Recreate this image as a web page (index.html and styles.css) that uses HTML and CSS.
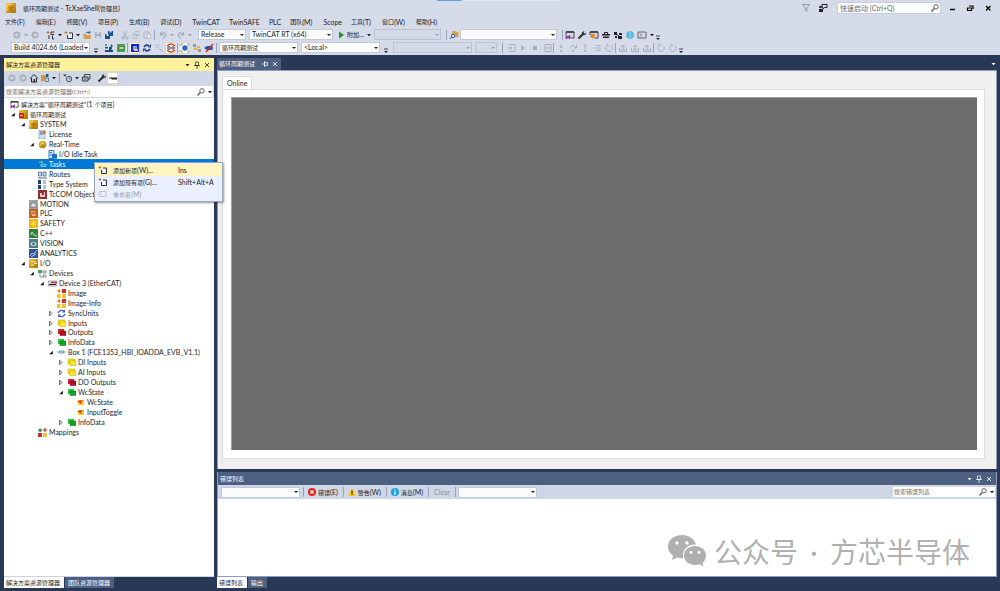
FILE: index.html
```html
<!DOCTYPE html>
<html lang="zh-CN">
<head>
<meta charset="utf-8">
<title>循环周期测试 - TcXaeShell</title>
<link rel="stylesheet" href="styles.css">
</head>
<body>
<svg class="defs" aria-hidden="true">
  <defs>
    <linearGradient id="gold" x1="0" y1="0" x2="1" y2="1"><stop offset="0" stop-color="#f0c43c"/><stop offset="1" stop-color="#a86f08"/></linearGradient>
    <symbol id="caret" viewBox="0 0 7 10"><path d="M2 4h4L4 6.300z" fill="currentColor"/></symbol>
    <symbol id="over" viewBox="0 0 5 12"><path d="M1 7h4" stroke="currentColor" stroke-width=".8"/><path d="M1 9h4L3 11z" fill="currentColor"/></symbol>
    <symbol id="cube" viewBox="0 0 10 10"><rect width="10" height="10" rx="1" fill="url(#gold)"/><path d="M3 4l3-1 2 1v3L5 8.500 3 7z" fill="#c48a14"/><path d="M3 4l2 1 3-1M5 5v3.500" stroke="#8a5a08" stroke-width=".6" fill="none"/><path d="M1 8V2l4-1" stroke="#fbe48a" stroke-width=".8" fill="none"/></symbol>
    <symbol id="back" viewBox="0 0 10 10"><circle cx="5" cy="5" r="3.500" fill="#a9aebb"/><path d="M7 5H3.500M5 3.300L3.300 5 5 6.700" stroke="#e8ebf3" fill="none"/></symbol>
    <symbol id="fwd" viewBox="0 0 10 10"><circle cx="5" cy="5" r="3.500" fill="#a9aebb"/><path d="M3 5h3.500M5 3.300L6.700 5 5 6.700" stroke="#e8ebf3" fill="none"/></symbol>
    <symbol id="newp" viewBox="0 0 10 10"><path d="M2 1v3M.5 2.500h3" stroke="#c27d1a"/><path d="M5 2h3.500M5 2v2.500h3M3 5v4M6.500 5.500V9H8" fill="none" stroke="#333"/></symbol>
    <symbol id="newi" viewBox="0 0 10 10"><path d="M2 1v3M.5 2.500h3" stroke="#c27d1a"/><path d="M5 3h3.500v5.500h-5V5" fill="#eef" stroke="#333"/></symbol>
    <symbol id="open" viewBox="0 0 10 10"><path d="M1 4h3l1 1h4v4H2z" fill="#d9a04a"/><path d="M4 3q2-2 4 0M8 1v2H6" stroke="#1d5fa8" fill="none"/></symbol>
    <symbol id="save" viewBox="0 0 10 10"><path d="M2 2h6v6H2z" fill="#a9aebb"/><path d="M3.500 2h3v2h-3zM3.500 6h3v2h-3z" fill="#d6dbe9"/></symbol>
    <symbol id="saveall" viewBox="0 0 10 10"><path d="M4 1h5v5H4zM1 4h5v5H1z" fill="#1b4e8c"/><path d="M5.500 1h2v1.500h-2zM2.500 4h2v2h-2z" fill="#d6dbe9"/></symbol>
    <symbol id="cut" viewBox="0 0 10 10"><path d="M3 1l3 6M7 1L4 7" stroke="#aab0bd" fill="none"/><circle cx="3" cy="8" r="1.200" fill="none" stroke="#aab0bd"/><circle cx="7" cy="8" r="1.200" fill="none" stroke="#aab0bd"/></symbol>
    <symbol id="copy" viewBox="0 0 10 10"><path d="M4 1.500h4v4H4zM2 4h4v4.500H2z" fill="#d6dbe9" stroke="#b0b5c2" stroke-width=".8"/></symbol>
    <symbol id="paste" viewBox="0 0 10 10"><path d="M2 2h5v6H2z" fill="none" stroke="#b0b5c2"/><path d="M5 4h3.500v4.500H5z" fill="#e6e9f2" stroke="#b0b5c2" stroke-width=".8"/></symbol>
    <symbol id="undo" viewBox="0 0 10 10"><path d="M2.500 2v3h3M3 4.500Q5 2 7 3.500T5 8.500" stroke="#a4aab8" fill="none" stroke-width="1.200"/></symbol>
    <symbol id="redo" viewBox="0 0 10 10"><path d="M7.500 2v3h-3M7 4.500Q5 2 3 3.500T5 8.500" stroke="#a4aab8" fill="none" stroke-width="1.200"/></symbol>
    <symbol id="play" viewBox="0 0 10 10"><path d="M3 1.500L8 5 3 8.500z" fill="#2b8a2f"/></symbol>
    <symbol id="find" viewBox="0 0 10 10"><path d="M3 1h3l1 1h2.500v5H3z" fill="#d9a04a"/><circle cx="4" cy="6" r="1.700" fill="#dfe8f5" stroke="#2866a8"/><path d="M2.500 7L1 9" stroke="#2866a8"/></symbol>
    <symbol id="winp" viewBox="0 0 10 10"><path d="M1 5V2h8v6H6" fill="none" stroke="#444"/><path d="M1 2h8" stroke="#333" stroke-width="1.500"/><path d="M1 5.500l2 1.500 2-2v4L3 7.500 1 9z" fill="#7a2f93" stroke="#7a2f93" stroke-width=".7"/></symbol>
    <symbol id="wino" viewBox="0 0 10 10"><path d="M1 5V2h8v6H6" fill="none" stroke="#444"/><path d="M1 2h8" stroke="#333" stroke-width="1.500"/><path d="M2 4h4v2L5 9 1 7z" fill="#dd8a2a"/></symbol>
    <symbol id="wrench" viewBox="0 0 10 10"><path d="M1.500 8.500L5.500 4.500" stroke="#2b2b2b" stroke-width="1.800"/><path d="M5 5Q4 1.500 7.500 1.200L6.500 3 7.500 3.800 9 2.500Q9.200 6 5 5" fill="#2b2b2b"/></symbol>
    <symbol id="toolbox" viewBox="0 0 10 10"><path d="M3.500 4V2.500h3V4" fill="none" stroke="#222"/><path d="M1 4h8v1.500H1zM2 6.500h6V8H2z" fill="#222"/></symbol>
    <symbol id="team" viewBox="0 0 10 10"><path d="M1 2h3v3H1zM6 3h3v2H6zM2 6h2v2H2zM5 6h4v3H5z" fill="#222"/><path d="M3 4l4 3" stroke="#222"/></symbol>
    <symbol id="globe" viewBox="0 0 10 10"><circle cx="5" cy="5" r="3.800" fill="#35a8dc"/><path d="M1 5h8M5 1v8M2.500 3h5M2.500 7h5" stroke="#b8e2f5" stroke-width=".6"/></symbol>
    <symbol id="cmd" viewBox="0 0 10 10"><path d="M1 2h8v6H1z" fill="none" stroke="#666"/><path d="M3 3.500L4.500 5 3 6.500" stroke="#555" fill="none" stroke-width=".8"/></symbol>
    <symbol id="act" viewBox="0 0 10 10"><path d="M1 1h2v2H1z" fill="#48a060"/><path d="M1 4h3v1.500H1zM1 7h8v2H1zM5 4h2v4H5z" fill="#1c4c76"/><path d="M6 3h3M7.500 1.500v5" stroke="#1c6ba4"/></symbol>
    <symbol id="green" viewBox="0 0 10 10"><path d="M1 1h8v8H1z" fill="#4fa04f"/><path d="M3 3.500h5v3H3z" fill="#b9dcae" stroke="#216d2b" stroke-width=".6"/></symbol>
    <symbol id="bluecfg" viewBox="0 0 10 10"><path d="M1 1h8v8H1z" fill="#1725c8"/><path d="M3 3h4v4H3z" fill="#7fa6d8"/><path d="M4 6h4v2H4z" fill="#d8c98a"/></symbol>
    <symbol id="reload" viewBox="0 0 10 10"><path d="M2 4Q4 1 7 3M8 6Q6 9 3 7" stroke="#27408a" stroke-width="1.600" fill="none"/><path d="M6 4.500h3V1zM4 5.500H1V9z" fill="#27408a"/></symbol>
    <symbol id="wand" viewBox="0 0 10 10"><path d="M3 3l6 6M2 1v2M1 5l2-1M5 1L4 3" stroke="#b0b4c0" fill="none"/></symbol>
    <symbol id="freerun" viewBox="0 0 10 10"><path d="M1 3Q5-1 9 3M1 7q4 4 8 0" stroke="#d5402f" fill="none" stroke-width="1.300"/><circle cx="3" cy="5" r="1.300" fill="none" stroke="#444"/><circle cx="7" cy="5" r="1.300" fill="none" stroke="#444"/></symbol>
    <symbol id="target" viewBox="0 0 10 10"><path d="M1 3V1h2M7 1h2v2M9 7v2H7M3 9H1V7" stroke="#88a" fill="none"/><circle cx="5" cy="5" r="2.700" fill="#2f62bd"/></symbol>
    <symbol id="links" viewBox="0 0 10 10"><path d="M1 1h3v3H1z" fill="#7b9dc0"/><path d="M5 3h3v2H5zM2 5h3v2H2z" fill="#e3b23c"/><path d="M6 6h3v3H6z" fill="#999"/></symbol>
    <symbol id="nogo" viewBox="0 0 10 10"><path d="M0 5l3-2h5l1 2-1 2H3z" fill="#244fae"/><path d="M2 9L9 1" stroke="#d42a20" stroke-width="1.500"/></symbol>
    <symbol id="din" viewBox="0 0 10 10"><path d="M3 1.500h6v7H3M1 5h5M4 3l2 2-2 2" stroke="#a8adba" fill="none"/></symbol>
    <symbol id="dplay" viewBox="0 0 10 10"><path d="M3 2l4 3-4 3z" fill="#aeb3c0"/></symbol>
    <symbol id="dstop" viewBox="0 0 10 10"><path d="M3 3h4v4H3z" fill="#a5aab7"/></symbol>
    <symbol id="dout" viewBox="0 0 10 10"><path d="M3 3V1.500h6v7H3V7M8 5H2M4 3L2 5l2 2" stroke="#aab0bd" fill="none"/></symbol>
    <symbol id="step" viewBox="0 0 10 10"><path d="M5 1v4M3.500 3.500L5 5l1.500-1.500" stroke="#a8adba" fill="none"/><circle cx="5" cy="8" r="1.100" fill="#a8adba"/></symbol>
    <symbol id="stepup" viewBox="0 0 10 10"><path d="M5 1.500V6M3.500 3L5 1.500 6.500 3" stroke="#a8adba" fill="none"/><circle cx="5" cy="8" r="1.100" fill="#a8adba"/></symbol>
    <symbol id="stepo" viewBox="0 0 10 10"><path d="M2 5q3-5 6 0M8.500 2v3H6" stroke="#a8adba" fill="none"/><circle cx="5" cy="8" r="1.100" fill="#a8adba"/></symbol>
    <symbol id="lines" viewBox="0 0 10 10"><path d="M4 2.500h5M4 5h5M4 7.500h5M1 5h2" stroke="#a8adba"/></symbol>
    <symbol id="cyc" viewBox="0 0 10 10"><path d="M3 2.500A3.300 3.300 0 1 0 7 2.500M2 1h2v3" stroke="#aeb3c0" fill="none"/></symbol>
    <symbol id="dbox" viewBox="0 0 10 10"><path d="M1.500 5v3.500h7V5M5 7V2M3 4l2-2 2 2M3 6.500h4" stroke="#a8adba" fill="none"/></symbol>
    <symbol id="home" viewBox="0 0 10 10"><path d="M1 5.500L5 1.500l4 4M2.500 5v4h5V5" fill="none" stroke="#222"/><path d="M4.500 6h1.500v3H4.500z" fill="#222"/></symbol>
    <symbol id="sync" viewBox="0 0 10 10"><path d="M1 2h4l1 1v5H1z" fill="#d79a3c"/><path d="M6 1h2.500v3H6z" fill="#244f8a"/><path d="M4 5h4.500v3.500H5" fill="none" stroke="#5a78a0"/></symbol>
    <symbol id="clock" viewBox="0 0 10 10"><circle cx="6" cy="6" r="2.700" fill="none" stroke="#444" stroke-width=".9"/><path d="M6 4.500V6h1.300" stroke="#444" fill="none" stroke-width=".7"/><path d="M0 1.500h4L2 3.800z" fill="#444"/></symbol>
    <symbol id="coll" viewBox="0 0 10 10"><path d="M3.500 4V1.500H9V6H7" fill="none" stroke="#444"/><path d="M1.500 4H7v4H1.500z" fill="none" stroke="#333"/><path d="M3 6h2.500" stroke="#333"/></symbol>
    <symbol id="dash" viewBox="0 0 10 10"><path d="M1 5h3" stroke="#222"/><path d="M3.500 4.500h5.500v2H3.500z" fill="#222"/></symbol>
    <symbol id="pin" viewBox="0 0 8 10"><path d="M2.500 2h3v3.500h-3zM1 5.500h6M4 5.500V9" stroke="currentColor" fill="none" stroke-width=".7"/></symbol>
    <symbol id="hpin" viewBox="0 0 8 10"><path d="M3.500 3.500h3v3h-3zM3.500 2v6M1 5h2.500" stroke="currentColor" fill="none" stroke-width=".7"/></symbol>
    <symbol id="x" viewBox="0 0 8 10"><path d="M2 3l4 4M6 3L2 7" stroke="currentColor" fill="none" stroke-width=".8"/></symbol>
    <symbol id="mag" viewBox="0 0 10 10"><circle cx="6" cy="3.800" r="2.200" fill="none" stroke="#555" stroke-width=".9"/><path d="M4.300 5.500L1.500 8.500" stroke="#555" stroke-width="1.200"/></symbol>
    <symbol id="funnel" viewBox="0 0 10 10"><path d="M1.500 1.500h7L5.800 5v3.500L4.200 7V5z" fill="none" stroke="#8a90a0" stroke-width=".9"/></symbol>
    <symbol id="feedback" viewBox="0 0 10 10"><path d="M4 1.500h5v3H6.500L5 6V4.500H4z" fill="none" stroke="#222"/><circle cx="2.500" cy="4" r="1.300" fill="#222"/><path d="M1 6h4v3H1z" fill="#222"/></symbol>
    <symbol id="exp" viewBox="0 0 6 10"><path d="M5 3v4H1z" fill="#111"/></symbol>
    <symbol id="col" viewBox="0 0 6 10"><path d="M1.500 2.500L4 5 1.500 7.500z" fill="#fff" stroke="#222" stroke-width=".8"/></symbol>
    <symbol id="proj" viewBox="0 0 9 9"><rect width="9" height="9" fill="url(#gold)"/><path d="M0 3h5v5H0z" fill="#d6281e"/><path d="M1.500 5.500h2" stroke="#fff"/></symbol>
    <symbol id="lic" viewBox="0 0 9 9"><path d="M1 0h6v9H1z" fill="#d5e3f3" stroke="#6a8db4" stroke-width=".6"/><path d="M2 2h2M2 4h3" stroke="#1d6ab5"/><circle cx="6" cy="2.500" r="1.700" fill="#e07030"/></symbol>
    <symbol id="rt" viewBox="0 0 9 9"><circle cx="4.500" cy="4.500" r="3.800" fill="url(#gold)"/><path d="M2 5l2-2 3 1" stroke="#fbe48a" fill="none" stroke-width=".8"/></symbol>
    <symbol id="task" viewBox="0 0 9 9"><path d="M1 .5h5v8H1z" fill="#e2ecf8" stroke="#2f78bd"/><path d="M4 4h5v4.500H4z" fill="#1771cc"/><path d="M2 2.500h2M2 5h2" stroke="#1771cc"/></symbol>
    <symbol id="tasks" viewBox="0 0 9 9"><path d="M1 1h4v2H1z" fill="#58b47a"/><path d="M3 4h5v2.500H3z" fill="#3b9be0" stroke="#9bd0f5" stroke-width=".7"/></symbol>
    <symbol id="routes" viewBox="0 0 9 9"><path d="M.5 2h3v4h-3zM5 2h3v4H5z" fill="#cfd8e5" stroke="#4c6584" stroke-width=".8"/><path d="M0 8h9" stroke="#4c6584"/></symbol>
    <symbol id="types" viewBox="0 0 9 9"><path d="M0 0h3v4H0zM0 5h3v4H0z" fill="#263b7b"/><path d="M5 1h3M5 3h3M5 6h3M5 8h3" stroke="#5d7fc5"/></symbol>
    <symbol id="tccom" viewBox="0 0 9 9"><path d="M0 0h9v9H0z" fill="#8f3038"/><path d="M2 7V3h2v2h2V2h1v5z" fill="#eec5c5"/></symbol>
    <symbol id="motion" viewBox="0 0 9 9"><path d="M0 0h9v9H0z" fill="#9da2a5"/><path d="M1 7l2-4h3l2 4z" fill="#e5e5e0" stroke="#5b5b5b" stroke-width=".6"/></symbol>
    <symbol id="plc" viewBox="0 0 9 9"><path d="M0 0h9v9H0z" fill="#c65f1c"/><path d="M2 2h4l1 5H3z" fill="#eab283"/><path d="M3 4h3" stroke="#8a3c0a"/></symbol>
    <symbol id="safety" viewBox="0 0 9 9"><path d="M0 0h9v9H0z" fill="#f3b409"/><path d="M4.500 1v7M2 3l5 3M2 6l5-3" stroke="#ffe68a"/></symbol>
    <symbol id="cpp" viewBox="0 0 9 9"><path d="M0 0h9v9H0z" fill="#337d3a"/><path d="M1.500 6l1.500-3 2 3 3 1" stroke="#c5e8b0" fill="none"/></symbol>
    <symbol id="vision" viewBox="0 0 9 9"><path d="M0 0h9v9H0z" fill="#4b7d84"/><ellipse cx="4.500" cy="5" rx="3" ry="2" fill="#cfe0e0"/><circle cx="4.500" cy="5" r="1.200" fill="#284a50"/></symbol>
    <symbol id="ana" viewBox="0 0 9 9"><path d="M0 0h9v9H0z" fill="#2f509a"/><path d="M1 7l2-3 2 1 3-4M2 8l5-3" stroke="#b9cbee" fill="none"/></symbol>
    <symbol id="io" viewBox="0 0 9 9"><path d="M0 0h9v9H0z" fill="url(#gold)"/><path d="M2 3h5M2 6h3M5 4.500h3" stroke="#fff0b0"/></symbol>
    <symbol id="devs" viewBox="0 0 9 9"><path d="M0 1h4v3H0z" fill="#47a052"/><path d="M2 4v4h3M5 2h3v2H5zM5 6h3v2H5z" stroke="#777" fill="none" stroke-width=".8"/></symbol>
    <symbol id="dev" viewBox="0 0 9 9"><path d="M0 2h9v5H0z" fill="#ddd" stroke="#777" stroke-width=".6"/><path d="M3 3.500h6" stroke="#d12626" stroke-width="1.500"/><path d="M1 5.500h7" stroke="#222"/></symbol>
    <symbol id="img" viewBox="0 0 9 9"><path d="M5 0h4v4H5z" fill="#d92d2d"/><path d="M0 5h3.500v4H0zM5 5h4v4H5z" fill="#eec52c"/><path d="M2 0l2 2-2 2-2-2z" fill="#e8842e"/></symbol>
    <symbol id="units" viewBox="0 0 9 9"><path d="M1 4Q3 0 7 2M8 5Q6 9 2 7" stroke="#3a55c4" stroke-width="1.300" fill="none"/><path d="M5 3.500h3V.5zM4 5.500H1v3z" fill="#3a55c4"/></symbol>
    <symbol id="fy" viewBox="0 0 9 9"><path d="M1 1h7v5H1z" fill="#f6e017" stroke="#bba20c" stroke-width=".5"/><path d="M3 3h6v4.500H3z" fill="#ffea2c" stroke="#bba20c" stroke-width=".5"/></symbol>
    <symbol id="fr" viewBox="0 0 9 9"><path d="M1 1h6v5H1z" fill="#d32436"/><path d="M3 3h6v4.500H3z" fill="#b50d22" stroke="#780814" stroke-width=".5"/></symbol>
    <symbol id="fg" viewBox="0 0 9 9"><path d="M1 1h6v5H1z" fill="#2ec540"/><path d="M3 3h6v4.500H3z" fill="#10a426" stroke="#07711a" stroke-width=".5"/></symbol>
    <symbol id="box" viewBox="0 0 9 9"><path d="M0 4h9" stroke="#7ba7cf"/><path d="M2.500 3h4v2h-4z" fill="#d6e8f6" stroke="#3b88c4" stroke-width=".8"/></symbol>
    <symbol id="var" viewBox="0 0 9 9"><path d="M2 2h6v5H2z" fill="#f3ce26"/><path d="M1 3l6-1-2 2.500 1 2z" fill="#dc3522"/></symbol>
    <symbol id="map" viewBox="0 0 9 9"><circle cx="2.200" cy="2.200" r="1.800" fill="#2f9a42"/><path d="M5 2h4M7 0v4" stroke="#d12d2d" stroke-width="1.200"/><path d="M0 5h4v4H0z" fill="#cf2d2d"/><path d="M5 5h4v4H5z" fill="#eec52c"/></symbol>
    <symbol id="ren" viewBox="0 0 10 10"><path d="M1 2.500h7v5H1zM3 4v2" fill="none" stroke="#c0c5d0"/></symbol>
    <symbol id="err" viewBox="0 0 10 10"><circle cx="5" cy="5" r="4" fill="#e02418"/><path d="M3.400 3.400l3.200 3.200M6.600 3.400L3.400 6.600" stroke="#fff" stroke-width="1.200"/></symbol>
    <symbol id="warn" viewBox="0 0 10 10"><path d="M5 1l4 8H1z" fill="#fdc90d"/><path d="M5 3.500v3M5 7.200v1" stroke="#000"/></symbol>
    <symbol id="info" viewBox="0 0 10 10"><circle cx="5" cy="5" r="4" fill="#1ba1e2"/><path d="M5 2.300v1.200M5 4.300v3.400" stroke="#fff" stroke-width="1.200"/></symbol>
  </defs>
</svg>

<header class="top">
  <div class="notch"></div>
  <div class="titlebar">
    <svg class="ic"><use href="#cube"/></svg>
    <h1 class="title"><span class="zh">循环周期测试</span> - TcXaeShell(<span class="zh">管理员</span>)</h1>
    <button class="wide" aria-label="筛选"><svg class="ic"><use href="#funnel"/></svg></button>
    <button class="wide" aria-label="反馈"><svg class="ic"><use href="#feedback"/></svg></button>
    <div class="quick"><input type="text" aria-label="快速启动" placeholder="快速启动 (Ctrl+Q)"><svg class="ic"><use href="#mag"/></svg></div>
    <button class="win" aria-label="最小化"><svg class="ic" viewBox="0 0 10 10"><path d="M3 6.500h5" stroke="#000" stroke-width="1.500"/></svg></button>
    <button class="win" aria-label="还原"><svg class="ic" viewBox="0 0 10 10"><path d="M4 3h4v3M2.500 5h4v2.500h-4z" stroke="#000" stroke-width="1.200" fill="none"/></svg></button>
    <button class="win" aria-label="关闭"><svg class="ic" viewBox="0 0 10 10"><path d="M3 3l4.500 4.500M7.500 3L3 7.500" stroke="#000" stroke-width="1.200"/></svg></button>
  </div>
  <nav class="menu">
    <button class="zm"><span class="zh">文件</span>(F)</button><button class="zm"><span class="zh">编辑</span>(E)</button><button class="zm"><span class="zh">视图</span>(V)</button><button class="zm"><span class="zh">项目</span>(P)</button><button class="zm"><span class="zh">生成</span>(B)</button><button class="zm"><span class="zh">调试</span>(D)</button><button>TwinCAT</button><button>TwinSAFE</button><button>PLC</button><button class="zm"><span class="zh">团队</span>(M)</button><button>Scope</button><button class="zm"><span class="zh">工具</span>(T)</button><button class="zm"><span class="zh">窗口</span>(W)</button><button class="zm"><span class="zh">帮助</span>(H)</button>
  </nav>
  <div class="bar">
    <i class="grip"></i>
    <button class="tb" aria-label="后退"><svg class="ic"><use href="#back"/></svg></button><button class="tc dim" aria-label="后退历史"><svg><use href="#caret"/></svg></button><button class="tb" aria-label="前进"><svg class="ic"><use href="#fwd"/></svg></button><i class="sep none"></i>
    <button class="tb" aria-label="新建项目"><svg class="ic"><use href="#newp"/></svg></button><button class="tc" aria-label="新建选项"><svg><use href="#caret"/></svg></button><button class="tb" aria-label="添加项"><svg class="ic"><use href="#newi"/></svg></button><button class="tc" aria-label="添加选项"><svg><use href="#caret"/></svg></button><button class="tb" aria-label="打开"><svg class="ic"><use href="#open"/></svg></button><button class="tb" aria-label="保存"><svg class="ic"><use href="#save"/></svg></button><button class="tb" aria-label="全部保存"><svg class="ic"><use href="#saveall"/></svg></button><i class="sep none"></i>
    <button class="tb" aria-label="剪切"><svg class="ic"><use href="#cut"/></svg></button><button class="tb" aria-label="复制"><svg class="ic"><use href="#copy"/></svg></button><button class="tb" aria-label="粘贴"><svg class="ic"><use href="#paste"/></svg></button><i class="sep"></i>
    <button class="tb" aria-label="撤消"><svg class="ic"><use href="#undo"/></svg></button><button class="tc dim" aria-label="撤消历史"><svg><use href="#caret"/></svg></button><button class="tb" aria-label="重做"><svg class="ic"><use href="#redo"/></svg></button><button class="tc dim" aria-label="重做历史"><svg><use href="#caret"/></svg></button><i class="sep none"></i>
    <select class="sel w-s" aria-label="配置"><option>Release</option></select>
    <select class="sel w-l" aria-label="平台"><option>TwinCAT RT (x64)</option></select>
    <button class="attach"><svg class="ic"><use href="#play"/></svg><span><span class="zh">附加</span>...</span><svg class="cr"><use href="#caret"/></svg></button>
    <select class="sel w-m off" aria-label="进程" disabled><option></option></select><i class="sep"></i>
    <button class="tb" aria-label="在文件中查找"><svg class="ic"><use href="#find"/></svg></button>
    <select class="sel w-xl" aria-label="查找"><option></option></select><i class="sep"></i>
    <span class="loose"><button class="tb" aria-label="解决方案"><svg class="ic"><use href="#winp"/></svg></button><button class="tb" aria-label="属性"><svg class="ic"><use href="#wrench"/></svg></button><button class="tb" aria-label="对象"><svg class="ic"><use href="#wino"/></svg></button><button class="tb" aria-label="工具箱"><svg class="ic"><use href="#toolbox"/></svg></button><button class="tb" aria-label="团队"><svg class="ic"><use href="#team"/></svg></button><button class="tb" aria-label="浏览器"><svg class="ic"><use href="#globe"/></svg></button><button class="tb" aria-label="命令"><svg class="ic"><use href="#cmd"/></svg></button></span><button class="tc" aria-label="更多窗口"><svg><use href="#caret"/></svg></button>
    <svg class="over"><use href="#over"/></svg>
  </div>
  <div class="bar">
    <i class="grip"></i>
    <select class="sel w-b" aria-label="版本"><option>Build 4024.66 (Loaded</option></select>
    <svg class="over"><use href="#over"/></svg><i class="grip"></i>
    <span class="loose"><button class="tb" aria-label="激活配置"><svg class="ic"><use href="#act"/></svg></button><button class="tb" aria-label="运行模式"><svg class="ic"><use href="#green"/></svg></button><i class="sep"></i><button class="tb on" aria-label="配置模式"><svg class="ic"><use href="#bluecfg"/></svg></button><button class="tb" aria-label="重新加载"><svg class="ic"><use href="#reload"/></svg></button><button class="tb" aria-label="扫描"><svg class="ic"><use href="#wand"/></svg></button><button class="tb on" aria-label="自由运行"><svg class="ic"><use href="#freerun"/></svg></button><i class="sep"></i><button class="tb on" aria-label="目标"><svg class="ic"><use href="#target"/></svg></button><button class="tb" aria-label="链接"><svg class="ic"><use href="#links"/></svg></button><button class="tb" aria-label="断开"><svg class="ic"><use href="#nogo"/></svg></button></span><i class="sep"></i>
    <select class="sel w-b cn" aria-label="项目"><option>循环周期测试</option></select>
    <select class="sel w-b" aria-label="目标系统"><option>&lt;Local&gt;</option></select>
    <svg class="over"><use href="#over"/></svg><i class="grip"></i>
    <select class="sel w-b off" aria-label="实例" disabled><option></option></select>
    <select class="sel w-xs off" aria-label="任务" disabled><option></option></select><i class="sep"></i>
    <span class="loose"><button class="tb" aria-label="登录"><svg class="ic"><use href="#din"/></svg></button><button class="tb" aria-label="启动"><svg class="ic"><use href="#dplay"/></svg></button><button class="tb" aria-label="停止"><svg class="ic"><use href="#dstop"/></svg></button><button class="tb" aria-label="注销"><svg class="ic"><use href="#dout"/></svg></button><i class="sep"></i><button class="tb" aria-label="步入"><svg class="ic"><use href="#step"/></svg></button><button class="tb" aria-label="步过"><svg class="ic"><use href="#stepo"/></svg></button><button class="tb" aria-label="步出"><svg class="ic"><use href="#stepup"/></svg></button><button class="tb" aria-label="显示语句"><svg class="ic"><use href="#lines"/></svg></button><button class="tb" aria-label="单周期"><svg class="ic"><use href="#cyc"/></svg></button><i class="sep"></i><button class="tb" aria-label="写入"><svg class="ic"><use href="#dbox"/></svg></button><button class="tb" aria-label="强制"><svg class="ic"><use href="#dbox"/></svg></button><button class="tb" aria-label="释放"><svg class="ic"><use href="#dbox"/></svg></button><i class="sep"></i><button class="tb" aria-label="复位"><svg class="ic"><use href="#cyc"/></svg></button><button class="tb" aria-label="原始复位"><svg class="ic"><use href="#cyc"/></svg></button></span>
    <svg class="over"><use href="#over"/></svg>
  </div>
</header>

<main class="work">
  <aside class="side">
    <section class="panel">
      <div class="phead gold"><h2 class="zh">解决方案资源管理器</h2><button aria-label="窗口位置"><svg class="pc"><use href="#caret"/></svg></button><button aria-label="自动隐藏"><svg class="pc"><use href="#pin"/></svg></button><button aria-label="关闭"><svg class="pc"><use href="#x"/></svg></button></div>
      <div class="ptools">
        <button class="tb" aria-label="后退"><svg class="ic"><use href="#back"/></svg></button><button class="tb" aria-label="前进"><svg class="ic"><use href="#fwd"/></svg></button><button class="tb" aria-label="主页"><svg class="ic"><use href="#home"/></svg></button><button class="tb" aria-label="视图"><svg class="ic"><use href="#sync"/></svg></button><button class="tc" aria-label="视图选项"><svg><use href="#caret"/></svg></button><i class="sep"></i><button class="tb" aria-label="挂起的更改"><svg class="ic"><use href="#clock"/></svg></button><button class="tc" aria-label="更改选项"><svg><use href="#caret"/></svg></button><button class="tb" aria-label="全部折叠"><svg class="ic"><use href="#coll"/></svg></button><i class="sep none"></i><button class="tb" aria-label="属性"><svg class="ic"><use href="#wrench"/></svg></button><button class="tb on" aria-label="预览"><svg class="ic"><use href="#dash"/></svg></button>
      </div>
      <div class="search"><input type="text" aria-label="搜索解决方案" placeholder="搜索解决方案资源管理器(Ctrl+;)"><svg class="ic"><use href="#mag"/></svg><svg class="cr"><use href="#caret"/></svg></div>
      <div class="tree" role="tree">
        <div class="n d0" role="treeitem"><svg class="ti"><use href="#winp"/></svg><span><span class="zh">解决方案"循环周期测试"</span>(1 <span class="zh">个项目</span>)</span></div>
        <div class="n d1" role="treeitem"><svg class="ar"><use href="#exp"/></svg><svg class="ti"><use href="#proj"/></svg><span class="zh">循环周期测试</span></div>
        <div class="n d2" role="treeitem"><svg class="ar"><use href="#exp"/></svg><svg class="ti"><use href="#cube"/></svg><span>SYSTEM</span></div>
        <div class="n d3" role="treeitem"><svg class="ar"></svg><svg class="ti"><use href="#lic"/></svg><span>License</span></div>
        <div class="n d3" role="treeitem"><svg class="ar"><use href="#exp"/></svg><svg class="ti"><use href="#rt"/></svg><span>Real-Time</span></div>
        <div class="n d4" role="treeitem"><svg class="ar"></svg><svg class="ti"><use href="#task"/></svg><span>I/O Idle Task</span></div>
        <div class="n d3 cur" role="treeitem" aria-selected="true"><svg class="ar"></svg><svg class="ti"><use href="#tasks"/></svg><span>Tasks</span></div>
        <div class="n d3" role="treeitem"><svg class="ar"></svg><svg class="ti"><use href="#routes"/></svg><span>Routes</span></div>
        <div class="n d3" role="treeitem"><svg class="ar"></svg><svg class="ti"><use href="#types"/></svg><span>Type System</span></div>
        <div class="n d3" role="treeitem"><svg class="ar"></svg><svg class="ti"><use href="#tccom"/></svg><span>TcCOM Objects</span></div>
        <div class="n d2" role="treeitem"><svg class="ar"></svg><svg class="ti"><use href="#motion"/></svg><span>MOTION</span></div>
        <div class="n d2" role="treeitem"><svg class="ar"></svg><svg class="ti"><use href="#plc"/></svg><span>PLC</span></div>
        <div class="n d2" role="treeitem"><svg class="ar"></svg><svg class="ti"><use href="#safety"/></svg><span>SAFETY</span></div>
        <div class="n d2" role="treeitem"><svg class="ar"></svg><svg class="ti"><use href="#cpp"/></svg><span>C++</span></div>
        <div class="n d2" role="treeitem"><svg class="ar"></svg><svg class="ti"><use href="#vision"/></svg><span>VISION</span></div>
        <div class="n d2" role="treeitem"><svg class="ar"></svg><svg class="ti"><use href="#ana"/></svg><span>ANALYTICS</span></div>
        <div class="n d2" role="treeitem"><svg class="ar"><use href="#exp"/></svg><svg class="ti"><use href="#io"/></svg><span>I/O</span></div>
        <div class="n d3" role="treeitem"><svg class="ar"><use href="#exp"/></svg><svg class="ti"><use href="#devs"/></svg><span>Devices</span></div>
        <div class="n d4" role="treeitem"><svg class="ar"><use href="#exp"/></svg><svg class="ti"><use href="#dev"/></svg><span>Device 3 (EtherCAT)</span></div>
        <div class="n d5" role="treeitem"><svg class="ar"></svg><svg class="ti"><use href="#img"/></svg><span>Image</span></div>
        <div class="n d5" role="treeitem"><svg class="ar"></svg><svg class="ti"><use href="#img"/></svg><span>Image-Info</span></div>
        <div class="n d5" role="treeitem"><svg class="ar"><use href="#col"/></svg><svg class="ti"><use href="#units"/></svg><span>SyncUnits</span></div>
        <div class="n d5" role="treeitem"><svg class="ar"><use href="#col"/></svg><svg class="ti"><use href="#fy"/></svg><span>Inputs</span></div>
        <div class="n d5" role="treeitem"><svg class="ar"><use href="#col"/></svg><svg class="ti"><use href="#fr"/></svg><span>Outputs</span></div>
        <div class="n d5" role="treeitem"><svg class="ar"><use href="#col"/></svg><svg class="ti"><use href="#fg"/></svg><span>InfoData</span></div>
        <div class="n d5" role="treeitem"><svg class="ar"><use href="#exp"/></svg><svg class="ti"><use href="#box"/></svg><span>Box 1 (FCE1353_HBI_IOADDA_EVB_V1.1)</span></div>
        <div class="n d6" role="treeitem"><svg class="ar"><use href="#col"/></svg><svg class="ti"><use href="#fy"/></svg><span>DI Inputs</span></div>
        <div class="n d6" role="treeitem"><svg class="ar"><use href="#col"/></svg><svg class="ti"><use href="#fy"/></svg><span>AI Inputs</span></div>
        <div class="n d6" role="treeitem"><svg class="ar"><use href="#col"/></svg><svg class="ti"><use href="#fr"/></svg><span>DO Outputs</span></div>
        <div class="n d6" role="treeitem"><svg class="ar"><use href="#exp"/></svg><svg class="ti"><use href="#fg"/></svg><span>WcState</span></div>
        <div class="n d7" role="treeitem"><svg class="ar"></svg><svg class="ti"><use href="#var"/></svg><span>WcState</span></div>
        <div class="n d7" role="treeitem"><svg class="ar"></svg><svg class="ti"><use href="#var"/></svg><span>InputToggle</span></div>
        <div class="n d6" role="treeitem"><svg class="ar"><use href="#col"/></svg><svg class="ti"><use href="#fg"/></svg><span>InfoData</span></div>
        <div class="n d3" role="treeitem"><svg class="ar"></svg><svg class="ti"><use href="#map"/></svg><span>Mappings</span></div>
      </div>
    </section>
    <div class="tabs"><button class="zh sel-tab">解决方案资源管理器</button><button class="zh">团队资源管理器</button></div>
  </aside>

  <div class="right">
    <div class="dtabs"><div class="dtab"><span class="zh">循环周期测试</span><button aria-label="固定"><svg class="pc"><use href="#hpin"/></svg></button><button aria-label="关闭"><svg class="pc"><use href="#x"/></svg></button></div><button class="more" aria-label="文档列表"><svg class="pc"><use href="#caret"/></svg></button></div>
    <section class="doc">
      <button class="online">Online</button>
      <div class="page"><div class="canvas"></div></div>
    </section>
    <section class="errors">
      <div class="phead"><h2 class="zh">错误列表</h2><button aria-label="窗口位置"><svg class="pc"><use href="#caret"/></svg></button><button aria-label="自动隐藏"><svg class="pc"><use href="#pin"/></svg></button><button aria-label="关闭"><svg class="pc"><use href="#x"/></svg></button></div>
      <div class="etools">
        <select class="sel w-b" aria-label="范围"><option></option></select><i class="sep"></i>
        <button class="flt"><svg class="ic"><use href="#err"/></svg><span><span class="zh">错误</span>(E)</span></button><i class="sep"></i>
        <button class="flt"><svg class="ic"><use href="#warn"/></svg><span><span class="zh">警告</span>(W)</span></button><i class="sep"></i>
        <button class="flt"><svg class="ic"><use href="#info"/></svg><span><span class="zh">消息</span>(M)</span></button><i class="sep"></i>
        <button class="flt clear" disabled>Clear</button><i class="sep"></i>
        <select class="sel w-b" aria-label="来源"><option></option></select>
        <div class="search"><input type="text" aria-label="搜索错误列表" placeholder="搜索错误列表"><svg class="ic"><use href="#mag"/></svg><svg class="cr"><use href="#caret"/></svg></div>
      </div>
      <div class="elist"></div>
    </section>
    <div class="tabs"><button class="zh sel-tab">错误列表</button><button class="zh">输出</button></div>
  </div>
</main>

<div class="ctx" role="menu">
  <button class="hot" role="menuitem"><svg class="ic"><use href="#newi"/></svg><span><span class="zh">添加新项</span>(W)...</span><span>Ins</span></button>
  <button role="menuitem"><svg class="ic"><use href="#newi"/></svg><span><span class="zh">添加现有项</span>(G)...</span><span>Shift+Alt+A</span></button>
  <button role="menuitem" disabled><svg class="ic"><use href="#ren"/></svg><span><span class="zh">重命名</span>(M)</span><span></span></button>
</div>

<div class="mark">
  <svg viewBox="0 0 38 32"><path d="M14 0C6 0 0 5 0 11.500c0 4 2 7 5 9L4 25l5-2.500c2 .6 4 .9 6.500.7C13 15 20 9 28 9.500 26.500 4 21 0 14 0z" fill="#b0b0b0"/><path d="M27 11c-6.500 0-11 4.300-11 9.500S20.500 30 27 30c1.500 0 3-.3 4.500-.7l4 2.200-1-3.500c2.200-1.800 3.500-4.500 3.500-7.500C38 15.300 33.500 11 27 11z" fill="#b0b0b0"/><g fill="#fff"><circle cx="9" cy="8" r="1.700"/><circle cx="19" cy="8" r="1.700"/><circle cx="23" cy="17.500" r="1.400"/><circle cx="31" cy="17.500" r="1.400"/></g></svg>
  <span>公众号</span><span class="dot">·</span><span>方芯半导体</span>
</div>
</body>
</html>
```

FILE: styles.css
```css
* { box-sizing: border-box; }

body {
  margin: 0;
  height: 100vh;
  display: flex;
  flex-direction: column;
  overflow: hidden;
  position: relative;
  background: #293955;
  color: #1e1e1e;
  font: 7px/10px Lato, "Noto Sans CJK SC", sans-serif;
}

button, input, select {
  font: inherit;
  color: inherit;
  margin: 0;
  padding: 0;
  border: 0;
  background: none;
  min-width: 0;
}

button { display: flex; align-items: center; white-space: nowrap; }
h1, h2 { margin: 0; font-weight: 400; font-size: 7px; }
svg { display: block; flex: none; }
.defs { position: absolute; width: 0; height: 0; }
.zh, h2.zh { font-size: 6px; font-family: "Noto Sans CJK SC", sans-serif; }
.ic { width: 10px; height: 10px; }
.pc { width: 8px; height: 10px; }
.cr { width: 7px; height: 10px; }

/* header */
.top { background: #d6dbe9; flex: none; position: relative; padding-bottom: 1px; }
.notch { position: absolute; top: 0; left: 437px; width: 126px; height: 1px; background: linear-gradient(90deg, #5ba3e6 25px, #e2e4ea 25px); }
.titlebar { display: flex; align-items: center; height: 16px; padding: 0 3px 0 6px; }
.title { flex: 1; padding-left: 7px; }
.wide { width: 17px; justify-content: center; }
.win { width: 18px; justify-content: center; }
.quick { display: flex; align-items: center; width: 104px; height: 12px; margin: 0 2px 1px 6px; background: #fcfcfc; border: 1px solid #c8cedd; }
.quick input { flex: 1; padding-left: 2px; }
input::placeholder { color: #6c6c6c; opacity: 1; }
.menu { display: flex; gap: 9px; height: 12px; padding-left: 5px; }
.zm { padding-right: 2px; }

.bar { display: flex; align-items: center; height: 13px; padding-left: 6px; }
.grip { width: 4px; height: 10px; margin-right: 1px; background: radial-gradient(circle, #9aa2b8 34%, transparent 40%) 0 0 / 2px 2px; }
.tb { width: 11px; height: 12px; justify-content: center; }
.tb.on { background: #fff; outline: 1px solid #e9d9a8; outline-offset: -1px; }
.tc, .tc svg { width: 7px; height: 10px; }
.dim { color: #9ca2b2; }
.sep { width: 1px; height: 10px; margin: 0 2px; background: #98a2b8; flex: none; }
.sep.none { background: none; }
.loose { display: flex; align-items: center; gap: 1px; }
.loose .sep { margin: 0; }
.over { width: 5px; height: 12px; }
.sel {
  appearance: none;
  height: 11px;
  margin-right: 3px;
  padding: 0 5px 0 2px;
  line-height: 9px;
  background: #fcfcfc url("data:image/svg+xml,%3Csvg xmlns='http://www.w3.org/2000/svg' width='6' height='4'%3E%3Cpath d='M1 1h4L3 3z' fill='%23222'/%3E%3C/svg%3E") no-repeat right center;
  border: 1px solid #c2c9da;
  opacity: 1;
}
.sel.cn { font-size: 6px; }
.sel.off { background-color: #d3d9e6; background-image: url("data:image/svg+xml,%3Csvg xmlns='http://www.w3.org/2000/svg' width='6' height='4'%3E%3Cpath d='M1 1h4L3 3z' fill='%239ca2b2'/%3E%3C/svg%3E"); border-color: #bcc4d4; }
.w-xs { width: 22px; }
.w-s { width: 48px; }
.w-m { width: 67px; }
.w-b { width: 79px; }
.w-l { width: 84px; }
.w-xl { width: 97px; }
.attach { gap: 1px; margin-right: 2px; }

/* workspace */
.work { flex: 1; min-height: 0; display: flex; gap: 3px; padding: 3px 3px 3px 4px; }
.side { width: 210px; flex: none; display: flex; flex-direction: column; }
.panel { flex: 1; min-height: 0; background: #fff; display: flex; flex-direction: column; border-bottom: 1px solid #cbd3e4; }
.phead { display: flex; align-items: center; flex: none; height: 13px; padding: 0 2px; background: #4d6082; color: #fff; }
.phead h2 { flex: 1; }
.phead button { width: 10px; justify-content: center; }
.gold { background: #fff29d; color: #1e1e1e; }
.ptools { display: flex; align-items: center; flex: none; height: 14px; padding-left: 2px; background: #cfd6e5; }
.search { display: flex; align-items: center; flex: none; height: 13px; background: #fff; border: 1px solid #cfd6e5; }
.search input { flex: 1; padding-left: 1px; font-size: 6px; }
.tree { display: grid; grid-auto-rows: 1fr; height: 337px; margin-top: 2px; }
.n { display: flex; align-items: center; white-space: nowrap; line-height: 9px; min-height: 0; }
.ar { width: 6px; height: 9px; margin-right: 3px; }
.ti { width: 9px; height: 9px; margin-right: 2px; }
.d0, .d1 { padding-left: 6px; }
.d2 { padding-left: 16px; }
.d3 { padding-left: 25px; }
.d4 { padding-left: 35px; }
.d5 { padding-left: 44px; }
.d6 { padding-left: 54px; }
.d7 { padding-left: 63px; }
.cur { background: #0078d7; color: #fff; }

.tabs { display: flex; gap: 1px; flex: none; height: 11px; }
.tabs button { padding: 0 4px 0 3px; background: #4d6082; color: #fff; }
.tabs .sel-tab { padding-left: 2px; background: #fff; color: #1e1e1e; }

.right { flex: 1; min-width: 0; display: flex; flex-direction: column; }
.dtabs { display: flex; justify-content: space-between; height: 12px; }
.dtab { display: flex; align-items: center; gap: 2px; padding: 0 2px; background: #4d6082; color: #fff; }
.dtab .zh { padding-right: 4px; }
.more { color: #fff; }
.doc { flex: 1; min-height: 0; display: flex; flex-direction: column; padding: 5px 11px 10px 4px; background: #f0f0f0; border: 1px solid #8e9bbc; border-width: 1px 1px 0 1px; }
.online { align-self: flex-start; height: 13px; padding: 0 4px; background: #fff; border: 1px solid #dcdcdc; border-bottom: 0; }
.page { flex: 1; padding: 7px 7px 8px 8px; background: #fff; border: 1px solid #dcdcdc; }
.canvas { height: 100%; background: #6d6d6d; border: 1px solid #a0a0a0; border-width: 1px 0 0 1px; }
.errors { flex: none; height: 105px; margin-top: 3px; display: flex; flex-direction: column; border: 1px solid #8e9bbc; border-top: 0; background: #fff; }
.etools { display: flex; align-items: center; height: 14px; flex: none; padding-left: 3px; background: #cfd6e5; }
.etools .sel { margin-right: 1px; }
.flt { padding: 0 3px 0 1px; gap: 1px; }
.clear { color: #8a8f9c; padding: 0 3px; }
.etools .search { width: 104px; height: 12px; margin-left: auto; }

/* context menu over the tree */
.ctx { position: absolute; left: 94px; top: 162px; width: 129px; padding: 1px; background: #eaf0ff; border: 1px solid #9ba7b7; box-shadow: 1px 1px 2px #0006; }
.ctx button { display: grid; grid-template-columns: 10px 60px 1fr; column-gap: 5px; width: 100%; height: 12px; padding-left: 2px; text-align: left; }
.ctx .hot { background: #fdf4bf; }
.ctx button:disabled { color: #9a9ea8; }

/* watermark over the error list */
.mark { position: absolute; right: 30px; bottom: 20px; display: flex; align-items: center; gap: 8px; color: #b0b0b0; font: 28px/40px "Noto Sans CJK SC", sans-serif; }
.mark svg { width: 38px; height: 32px; }
.mark .dot { width: 16px; text-align: center; font-family: Lato, sans-serif; }
```
